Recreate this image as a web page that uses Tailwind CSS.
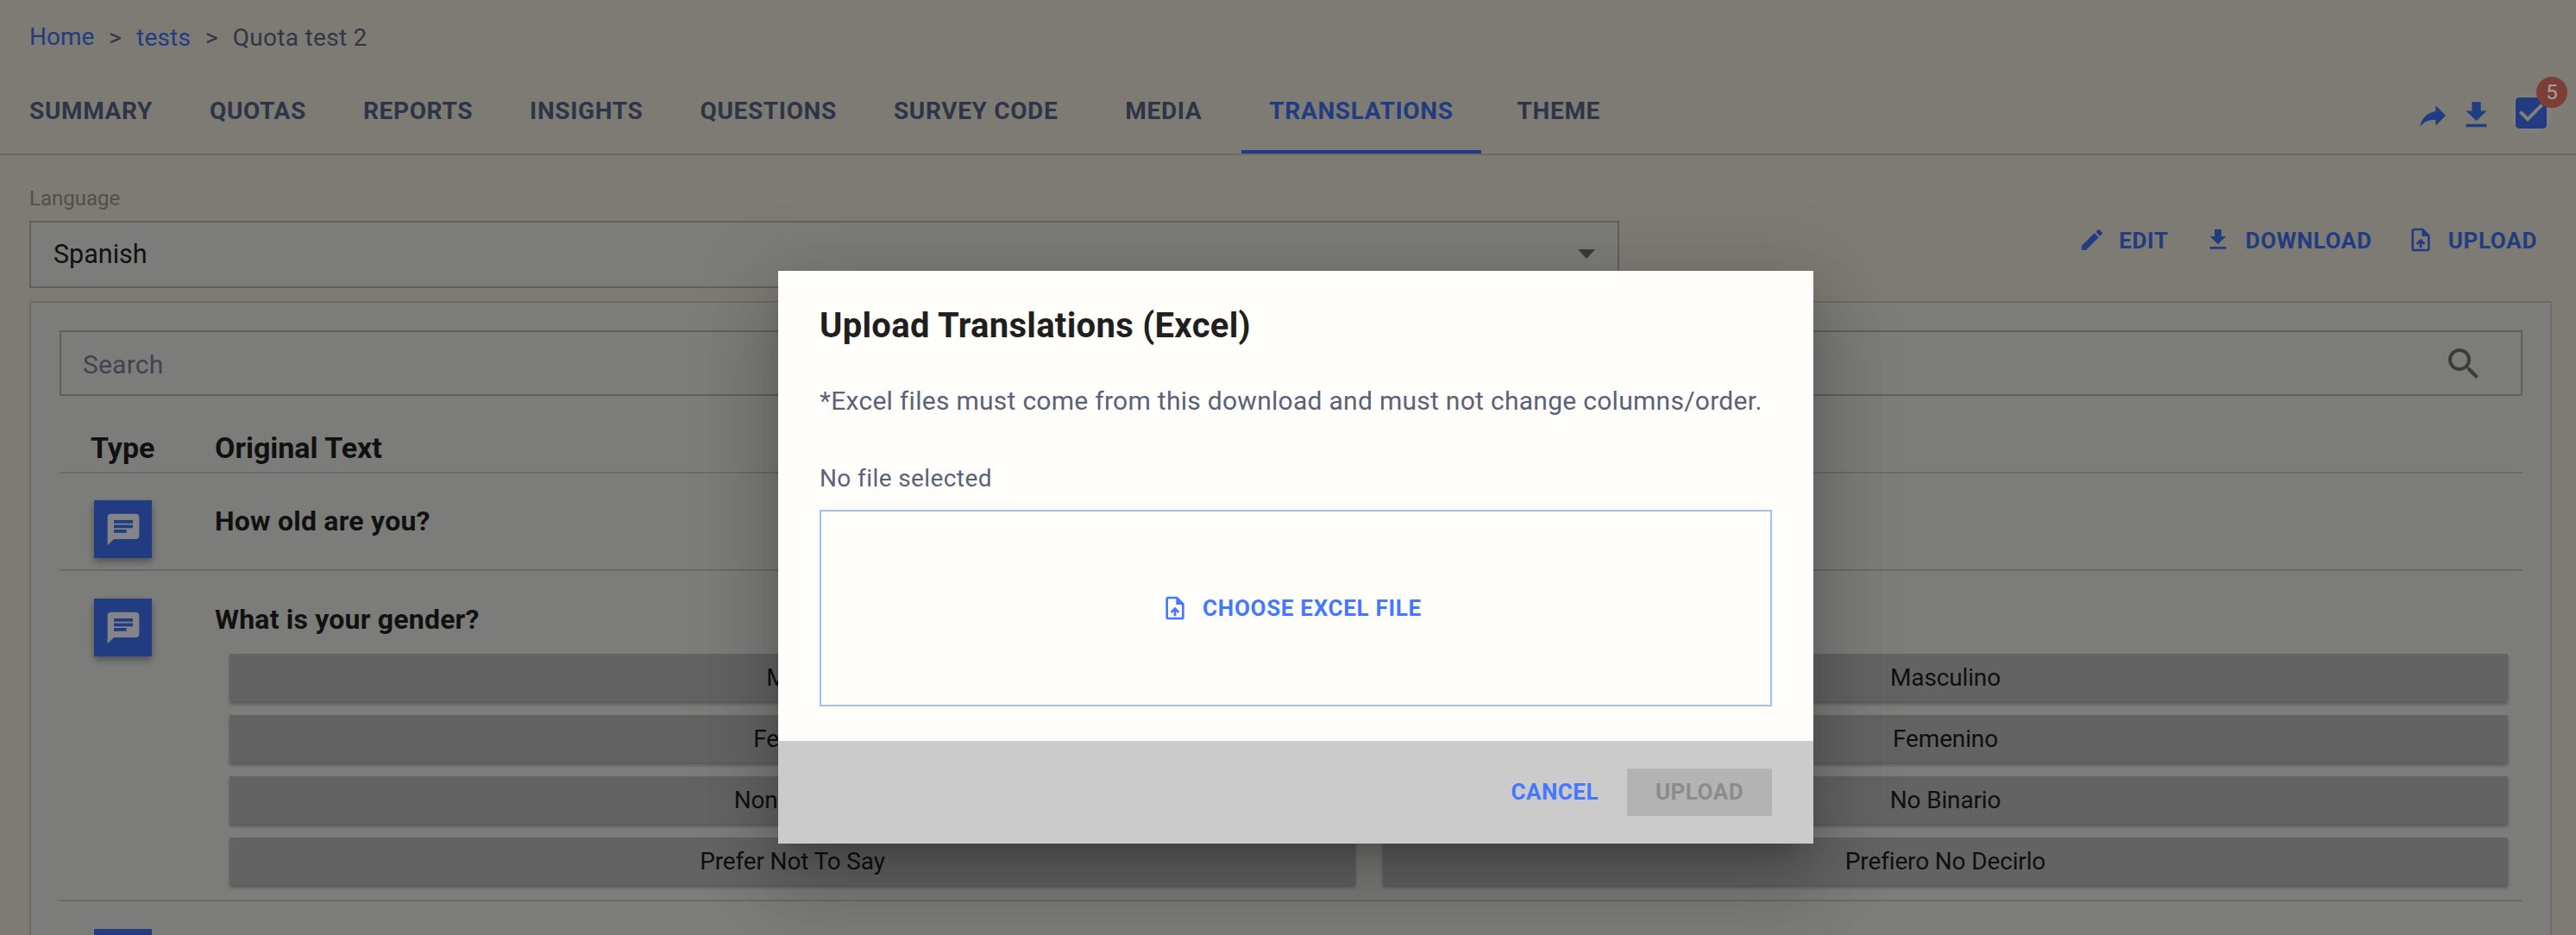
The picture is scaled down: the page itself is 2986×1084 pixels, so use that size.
<!DOCTYPE html>
<html lang="en">
<head>
<meta charset="utf-8">
<title>Translations</title>
<script src="https://cdn.jsdelivr.net/npm/@tailwindcss/browser@4"></script>
</head>
<body class="m-0">
<div class="relative w-[2986px] h-[1084px] overflow-hidden bg-[#c5c0b8] font-['Roboto',sans-serif]">
  <!-- breadcrumb -->
  <div class="flex items-center h-[88px] pl-[34px] text-[28px] text-[#4f556c]">
    <span class="text-[#355fc8] -mt-[3px]">Home</span>
    <span class="mx-[17px]">&gt;</span>
    <span class="text-[#355fc8] tracking-[0.2px]">tests</span>
    <span class="mx-[17px]">&gt;</span>
    <span class="tracking-[0.3px]">Quota test 2</span>
  </div>
  <!-- tabs -->
  <div class="relative flex h-[92px] border-b-2 border-[#aca79e] pl-px text-[28px] font-bold tracking-[0.65px] text-[#4a5470]">
    <div class="flex items-center h-[90px] pb-[8px] px-[33px]">SUMMARY</div>
    <div class="flex items-center h-[90px] pb-[8px] px-[33px]">QUOTAS</div>
    <div class="flex items-center h-[90px] pb-[8px] px-[33px]">REPORTS</div>
    <div class="flex items-center h-[90px] pb-[8px] px-[33px]">INSIGHTS</div>
    <div class="flex items-center h-[90px] pb-[8px] px-[33px]">QUESTIONS</div>
    <div class="flex items-center h-[90px] pb-[8px] pl-[33px] pr-[33px]">SURVEY CODE</div>
    <div class="flex items-center h-[90px] pb-[8px] pl-[45px] pr-[46px]">MEDIA</div>
    <div class="flex items-center h-[90px] pb-[4px] px-[32px] border-b-4 border-[#355fc8] text-[#355fc8]">TRANSLATIONS</div>
    <div class="flex items-center h-[90px] pb-[8px] pl-[42px] pr-[33px]">THEME</div>
    <!-- top right icons -->
    <div class="ml-auto relative w-[186px] h-[90px]">
      <svg class="absolute left-[0px] top-[26px] w-[40px] h-[40px] fill-[#355fc8]" viewBox="0 0 24 24"><path d="M14 9V5l7 7-7 7v-4.1c-5 0-8.5 1.6-11 5.1 1-5 4-10 11-11z"/></svg>
      <svg class="absolute left-[50px] top-[25px] w-[41px] h-[41px] fill-[#355fc8]" viewBox="0 0 24 24"><path d="M19 9h-4V3H9v6H5l7 7 7-7zM5 18v2h14v-2H5z"/></svg>
      <div class="absolute left-[110px] top-[18px] w-[48px] h-[48px] rounded-full bg-white/10"></div>
      <svg class="absolute left-[110px] top-[19px] w-[48px] h-[48px] fill-[#355fc8]" viewBox="0 0 24 24"><path d="M19 3H5c-1.11 0-2 .9-2 2v14c0 1.1.89 2 2 2h14c1.11 0 2-.9 2-2V5c0-1.1-.89-2-2-2zm-9 14l-5-5 1.41-1.41L10 14.17l7.59-7.59L19 8l-9 9z"/></svg>
      <div class="absolute left-[140px] top-[1px] w-[36px] h-[36px] rounded-full bg-[#c36253] text-white text-[24px] font-normal tracking-normal flex items-center justify-center">5</div>
    </div>
  </div>
  <!-- language row -->
  <div class="flex h-[169px] pl-[34px] pr-[45px]">
    <div class="w-[1843px] shrink-0">
      <div class="h-[76px] pt-[36px] text-[24px] leading-[28px] text-[#7d7d77]">Language</div>
      <div class="flex items-center justify-between h-[78px] border-2 border-[#969693] bg-[#c3c3c0] pl-[26px] pr-[26px] pb-px text-[30.5px] text-[#1b1b1b]">
        <span>Spanish</span>
        <span class="w-0 h-0 border-x-[10px] border-x-transparent border-t-[11px] border-t-[#5e5e5b]"></span>
      </div>
    </div>
    <div class="ml-auto flex items-start pt-[82px] text-[26px] leading-[34px] font-bold tracking-[0.7px] text-[#355fc8]">
      <svg class="w-[32px] h-[32px] fill-current" viewBox="0 0 24 24"><path d="M3 17.25V21h3.75L17.81 9.94l-3.75-3.75L3 17.25zM20.71 7.04c.39-.39.39-1.02 0-1.41l-2.34-2.34c-.39-.39-1.02-.39-1.41 0l-1.83 1.83 3.75 3.75 1.83-1.83z"/></svg>
      <span class="ml-[15px]">EDIT</span>
      <svg class="ml-[41px] w-[32px] h-[32px] fill-current" viewBox="0 0 24 24"><path d="M19 9h-4V3H9v6H5l7 7 7-7zM5 18v2h14v-2H5z"/></svg>
      <span class="ml-[16px]">DOWNLOAD</span>
      <svg class="ml-[40px] w-[32px] h-[32px] fill-current" viewBox="0 0 24 24"><path d="M14 2H6c-1.1 0-1.99.9-1.99 2L4 20c0 1.1.89 2 1.99 2H18c1.1 0 2-.9 2-2V8l-6-6zm4 18H6V4h7v5h5v11zM8 15.01l1.41 1.41L11 14.84V19h2v-4.16l1.59 1.59L16 15.01 12.01 11 8 15.01z"/></svg>
      <span class="ml-[16px]">UPLOAD</span>
    </div>
  </div>
  <!-- panel -->
  <div class="ml-[34px] mr-[28px] h-[760px] border-2 border-[#aca99f] bg-[#c3c3c0] pl-[33px] pr-[32px] pt-[32px]">
    <div class="flex items-center justify-between h-[76px] border-2 border-[#969693] pt-[2px] pl-[25px] pr-[42px] text-[30px] tracking-[0.2px] text-[#646a7b]">
      <span>Search</span>
      <svg class="w-[48px] h-[48px] fill-[#5f5f5e]" viewBox="0 0 24 24"><path d="M15.5 14h-.79l-.28-.27C15.41 12.59 16 11.11 16 9.5 16 5.91 13.09 3 9.5 3S3 5.91 3 9.5 5.91 16 9.5 16c1.61 0 3.09-.59 4.23-1.57l.27.28v.79l5 4.99L20.49 19l-4.99-5zm-6 0C7.01 14 5 11.99 5 9.5S7.01 5 9.5 5 14 7.01 14 9.5 11.99 14 9.5 14z"/></svg>
    </div>
    <!-- header -->
    <div class="flex h-[90px] border-b-2 border-[#a6a6a3] pt-[40px] text-[34px] leading-[40px] font-bold text-[#1b1b1b]">
      <div class="w-[180px] pl-[36px]">Type</div>
      <div>Original Text</div>
    </div>
    <!-- row 1 -->
    <div class="flex h-[113px] border-b-2 border-[#a6a6a3] pt-[31px]">
      <div class="w-[180px] pl-[40px]">
        <div class="flex items-center justify-center w-[67px] h-[67px] bg-[#355fc8] shadow-[0_4px_8px_rgba(0,0,0,0.35)]">
          <svg class="w-[44px] h-[44px] fill-[#d1d1d6]" viewBox="0 0 24 24"><path d="M20 2H4c-1.1 0-1.99.9-1.99 2L2 22l4-4h14c1.1 0 2-.9 2-2V4c0-1.1-.9-2-2-2zM6 9h12v2H6V9zm8 5H6v-2h8v2zm4-6H6V6h12v2z"/></svg>
        </div>
      </div>
      <div class="pt-[4px] text-[32px] leading-[40px] tracking-[0.22px] font-bold text-[#1b1b1b]">How old are you?</div>
    </div>
    <!-- row 2 -->
    <div class="flex h-[383px] border-b-2 border-[#a6a6a3] pt-[32px]">
      <div class="w-[180px] shrink-0 pl-[40px]">
        <div class="flex items-center justify-center w-[67px] h-[67px] bg-[#355fc8] shadow-[0_4px_8px_rgba(0,0,0,0.35)]">
          <svg class="w-[44px] h-[44px] fill-[#d1d1d6]" viewBox="0 0 24 24"><path d="M20 2H4c-1.1 0-1.99.9-1.99 2L2 22l4-4h14c1.1 0 2-.9 2-2V4c0-1.1-.9-2-2-2zM6 9h12v2H6V9zm8 5H6v-2h8v2zm4-6H6V6h12v2z"/></svg>
        </div>
      </div>
      <div class="grow">
        <div class="pt-[4px] text-[32px] leading-[40px] tracking-[0.2px] font-bold text-[#1b1b1b]">What is your gender?</div>
        <div class="ml-[17px] mt-[20px] grid grid-cols-[1305px_1304px] gap-x-[32px] gap-y-[16px] text-[28px] tracking-[-0.15px] text-[#181818]">
          <div class="flex items-center justify-center h-[55px] bg-[#9c9c9c] shadow-[0_3px_4px_rgba(0,0,0,0.3)]">Male</div>
          <div class="flex items-center justify-center h-[55px] bg-[#9c9c9c] shadow-[0_3px_4px_rgba(0,0,0,0.3)]">Masculino</div>
          <div class="flex items-center justify-center h-[55px] bg-[#9c9c9c] shadow-[0_3px_4px_rgba(0,0,0,0.3)]">Female</div>
          <div class="flex items-center justify-center h-[55px] bg-[#9c9c9c] shadow-[0_3px_4px_rgba(0,0,0,0.3)]">Femenino</div>
          <div class="flex items-center justify-center h-[55px] bg-[#9c9c9c] shadow-[0_3px_4px_rgba(0,0,0,0.3)]">Non-Binary</div>
          <div class="flex items-center justify-center h-[55px] bg-[#9c9c9c] shadow-[0_3px_4px_rgba(0,0,0,0.3)]">No Binario</div>
          <div class="flex items-center justify-center h-[55px] bg-[#9c9c9c] shadow-[0_3px_4px_rgba(0,0,0,0.3)]">Prefer Not To Say</div>
          <div class="flex items-center justify-center h-[55px] bg-[#9c9c9c] shadow-[0_3px_4px_rgba(0,0,0,0.3)]">Prefiero No Decirlo</div>
        </div>
      </div>
    </div>
    <!-- row 3 (cut off) -->
    <div class="pt-[32px] pl-[40px]">
      <div class="w-[67px] h-[67px] bg-[#355fc8]"></div>
    </div>
  </div>
  <!-- backdrop -->
  <div class="absolute inset-0 bg-black/36"></div>
  <!-- dialog -->
  <div class="absolute left-[902px] top-[314px] w-[1200px] h-[664px] flex flex-col bg-[#fffefa] shadow-[0_22px_30px_-14px_rgba(0,0,0,0.2),0_48px_76px_6px_rgba(0,0,0,0.14),0_18px_92px_16px_rgba(0,0,0,0.12)]">
    <div class="grow px-[48px] pt-[40px]">
      <h2 class="text-[40px] leading-[48px] tracking-[0.3px] font-bold text-[#1f1f1f]">Upload Translations (Excel)</h2>
      <p class="mt-[44px] text-[30px] leading-[38px] tracking-[0.28px] text-[#5a6178]">*Excel files must come from this download and must not change columns/order.</p>
      <p class="mt-[53px] text-[28px] leading-[36px] tracking-[0.4px] text-[#5a6178]">No file selected</p>
      <div class="mt-[18px] flex items-center justify-center w-[1104px] h-[228px] pr-[10px] border-2 border-[#a3bffa] text-[26px] font-bold tracking-[0.7px] text-[#4479ff]">
        <svg class="w-[32px] h-[32px] fill-current" viewBox="0 0 24 24"><path d="M14 2H6c-1.1 0-1.99.9-1.99 2L4 20c0 1.1.89 2 1.99 2H18c1.1 0 2-.9 2-2V8l-6-6zm4 18H6V4h7v5h5v11zM8 15.01l1.41 1.41L11 14.84V19h2v-4.16l1.59 1.59L16 15.01 12.01 11 8 15.01z"/></svg>
        <span class="ml-[16px]">CHOOSE EXCEL FILE</span>
      </div>
    </div>
    <div class="flex items-center justify-end h-[119px] pr-[48px] bg-[#cbcbcb] text-[26px] font-bold tracking-[0.5px]">
      <span class="text-[#4479ff]">CANCEL</span>
      <span class="ml-[33px] flex items-center justify-center w-[168px] h-[55px] bg-[#b3b3b3] text-[#8c8c8c]">UPLOAD</span>
    </div>
  </div>
</div>
</body>
</html>
